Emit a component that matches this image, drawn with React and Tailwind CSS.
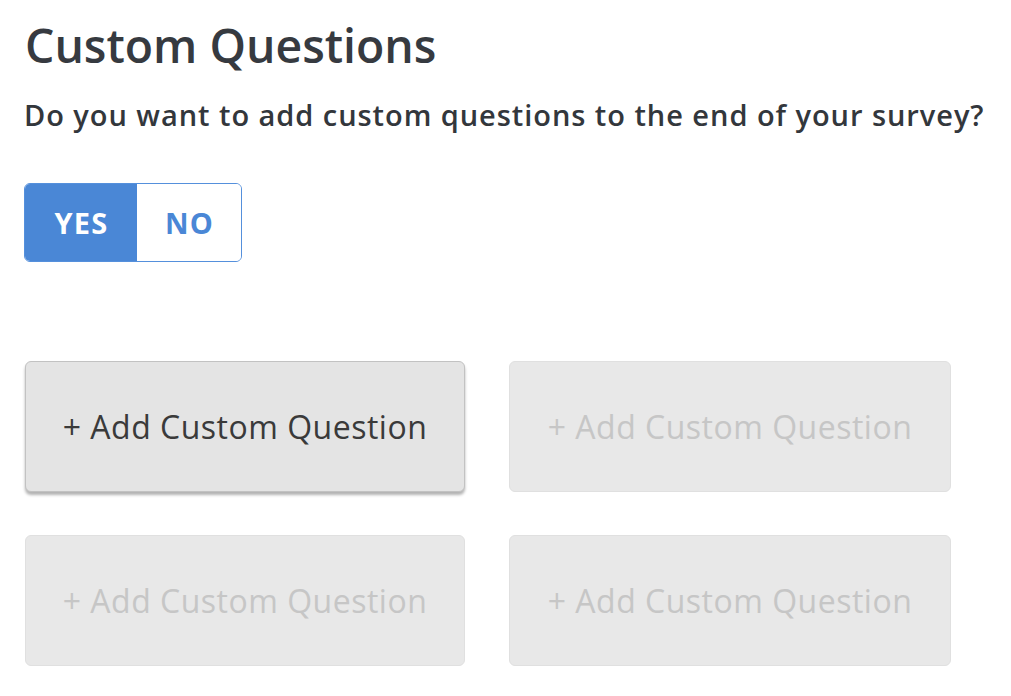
export default function App() {
  const font = { fontFamily: '"Open Sans", "Liberation Sans", sans-serif' };
  return (
    <div className="w-[1011px] h-[696px] bg-white overflow-hidden text-[#3a3d42]" style={font}>
      <div className="pl-[24px] pt-[14px]">
        <h1 className="text-[46.4px] leading-[63px] font-semibold text-[#363a40] pl-[1px]">Custom Questions</h1>
        <p className="mt-[18px] text-[29px] leading-[39px] font-semibold text-[#33373c] tracking-[0.95px]">Do you want to add custom questions to the end of your survey?</p>
        <div className="mt-[49px] flex w-[218px] h-[79px] rounded-[6px] border border-[#5590dc] overflow-hidden">
          <div className="w-[112px] bg-[#4a87d6] text-white flex items-center justify-center text-[29px] font-bold tracking-[1.2px] pl-[1px]">YES</div>
          <div className="flex-1 bg-white text-[#4a87d6] flex items-center justify-center text-[29px] font-bold tracking-[1.2px] pl-[1px]">NO</div>
        </div>
        <div className="mt-[99px] pl-[1px] grid grid-cols-[440px_442px] gap-x-[44px] gap-y-[43px]">
          <button className="h-[131px] rounded-[6px] bg-[#e4e4e4] border border-[#c2c2c2] shadow-[0_3px_3px_rgba(0,0,0,0.3)] text-[32px] tracking-[0.5px] text-[#3a3a3a]">+ Add Custom Question</button>
          <button className="h-[131px] rounded-[6px] bg-[#e8e8e8] border border-[#e0e0e0] text-[32px] tracking-[0.5px] text-[#c6c6c6]">+ Add Custom Question</button>
          <button className="h-[131px] rounded-[6px] bg-[#e8e8e8] border border-[#e0e0e0] text-[32px] tracking-[0.5px] text-[#c6c6c6]">+ Add Custom Question</button>
          <button className="h-[131px] rounded-[6px] bg-[#e8e8e8] border border-[#e0e0e0] text-[32px] tracking-[0.5px] text-[#c6c6c6]">+ Add Custom Question</button>
        </div>
      </div>
    </div>
  );
}
